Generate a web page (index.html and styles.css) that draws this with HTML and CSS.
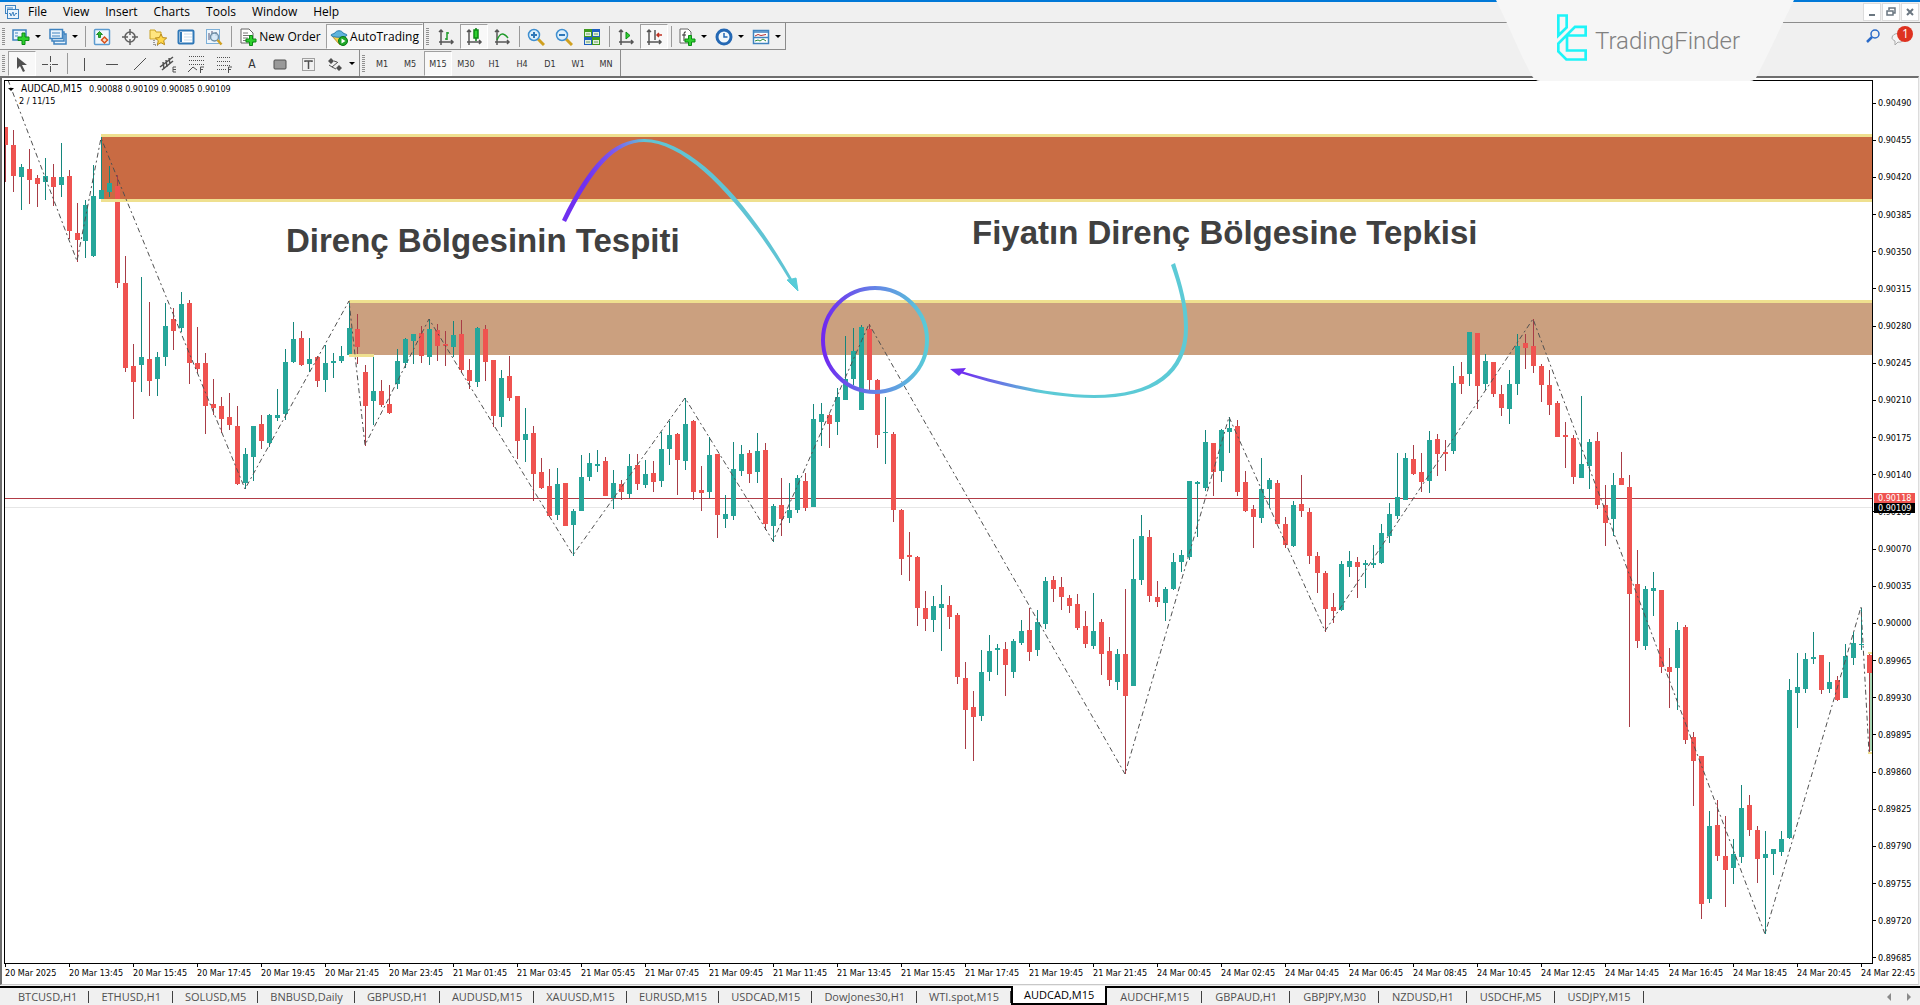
FILE: index.html
```html
<!DOCTYPE html>
<html lang="tr">
<head>
<meta charset="utf-8">
<title>AUDCAD,M15</title>
<link rel="stylesheet" href="styles.css">
<script src="chart.js" defer></script>
</head>
<body>
<header class="top">
  <div class="menubar">
    <svg class="app-icon" viewBox="0 0 16 16" fill="#eaf4fc" stroke="#3f83c0"><rect x="1.500" y="1.500" width="10" height="8"/><rect x="3.500" y="5.500" width="11" height="9"/><path d="M5 10l1-1 1 3 2-4 1 4 2-3 1 1M3 4h6" fill="none"/></svg>
    <nav class="menu">
      <button>File</button><button>View</button><button>Insert</button><button>Charts</button><button>Tools</button><button>Window</button><button>Help</button>
    </nav>
    <div class="window-buttons">
      <button aria-label="Minimize"><svg viewBox="0 0 16 16"><path d="M5 11h6" stroke="#6a7680" stroke-width="2"/></svg></button>
      <button aria-label="Restore"><svg viewBox="0 0 16 16" fill="none" stroke="#6a7680" stroke-width="1.500"><path d="M6 6V4h6v5h-2M4 7h6v4H4z"/></svg></button>
      <button aria-label="Close"><svg viewBox="0 0 16 16"><path d="M5 5l6 6M11 5l-6 6" stroke="#6a7680" stroke-width="2"/></svg></button>
    </div>
  </div>

  <div class="toolbar">
    <div class="group">
      <span class="grip"></span>
      <button class="drop" aria-label="New chart"><svg viewBox="0 0 18 18"><rect x="1" y="2" width="13" height="10" fill="#eaf4fc" stroke="#3f83c0" stroke-width="1.500"/><path d="M3 5h3M3 8h3" stroke="#3f83c0"/><path d="M10 5h3v4h4v3.500h-4v4h-3v-4H6V9h4z" fill="#2fd02f" stroke="#0a8a14"/></svg><i class="arrow"></i></button>
      <button class="drop" aria-label="Profiles"><svg viewBox="0 0 18 18" fill="#eaf4fc" stroke="#3f83c0" stroke-width="1.500"><path d="M5 6h12v10H5z"/><path d="M3 4h12v9H3z"/><path d="M1 1.500h12.500v9H1z"/><path d="M3 5h8M3 8h8" stroke-width="1"/></svg><i class="arrow"></i></button>
      <span class="sep"></span>
      <button aria-label="Market Watch"><svg viewBox="0 0 18 18"><rect x="1.500" y="1.500" width="15" height="15" rx="1" fill="#eef6fc" stroke="#5b9bd0" stroke-width="1.500"/><path d="M6.500 3.500l3 3h-2v3h-2v-3h-2z" fill="#2cb82c" stroke="#0a7a14" stroke-width=".8"/><path d="M11.500 9l3 3-3 3-3-3z" fill="#fbe0c8" stroke="#d8501a" stroke-width="1.500"/></svg></button>
      <button aria-label="Data Window"><svg viewBox="0 0 18 18" fill="none" stroke="#606060" stroke-width="1.500"><circle cx="9" cy="9" r="5"/><path d="M9 1v6M9 11v6M1 9h6M11 9h6"/></svg></button>
      <button aria-label="Navigator"><svg viewBox="0 0 18 18"><path d="M1 2h5l1 2h5v7H1z" fill="#ffe680" stroke="#c9a227"/><path d="M5 12v5h4" fill="none" stroke="#444" stroke-dasharray="1 1"/><path d="M12 6l1.700 3.600 4 .4-3 2.700.9 4L12 14.700 8.400 16.700l.9-4-3-2.700 4-.4z" fill="#ffd84a" stroke="#b88a1a"/></svg></button>
      <button aria-label="Terminal"><svg viewBox="0 0 18 18"><rect x="1.500" y="2.500" width="15" height="13" rx="1" fill="#fff" stroke="#2f78b8" stroke-width="2"/><path d="M4 4v10" stroke="#2f78b8" stroke-width="2"/><path d="M7 6h8M7 9h8M7 12h8" stroke="#c8dcec"/></svg></button>
      <button aria-label="Strategy Tester"><svg viewBox="0 0 18 18"><rect x="1.500" y="1.500" width="13" height="14" fill="#eef6fc" stroke="#7db0d8"/><path d="M4 5v7M7 3v5M11 4v4" stroke="#557"/><circle cx="9.500" cy="9" r="4" fill="#cfe6f6" fill-opacity=".8" stroke="#7090a8" stroke-width="1.500"/><path d="M12.500 12l4 4.500" stroke="#d0a020" stroke-width="2.500"/></svg></button>
      <span class="sep"></span>
      <button class="text new-order"><svg viewBox="0 0 18 18"><path d="M2 1h8l4 4v10H2z" fill="#fff" stroke="#666"/><path d="M4 5h5M4 7.500h8M4 10h5M4 12.500h3" stroke="#777"/><path d="M10.500 7.500h3v3.500H17v3h-3.500v3.500h-3V14H7v-3h3.500z" fill="#2fd02f" stroke="#0a8a14"/></svg>New Order</button>
      <button class="text auto pressed"><svg viewBox="0 0 18 18"><path d="M2 8l8 9 6-8z" fill="#f6d14a" stroke="#b8902a"/><path d="M1 7c0-1 3-1 4-2 1-3 7-3 8 0 1 1 4 1 4 2 0 3-16 3-16 0z" fill="#5fb4dc" stroke="#2d7fae"/><circle cx="13" cy="13" r="4.500" fill="#1fa82a" stroke="#0a7a14"/><path d="M11.500 10.500l4 2.500-4 2.500z" fill="#fff"/></svg>AutoTrading</button>
    </div>
    <div class="group">
      <span class="grip"></span>
      <button aria-label="Bar chart"><svg viewBox="0 0 18 18" fill="none" stroke="#555" stroke-width="1.500"><path d="M4 2v15M2 4l2-2 2 2M2 14h14M14 12l2 2-2 2"/><path d="M10 4v8M12 5h-2M8 11h2" stroke="#1f9a2a" /></svg></button>
      <button class="pressed" aria-label="Candlesticks"><svg viewBox="0 0 18 18" fill="none" stroke="#555" stroke-width="1.500"><path d="M4 2v15M2 4l2-2 2 2M2 14h14M14 12l2 2-2 2"/><path d="M11 0v13" stroke="#0a7a14"/><rect x="9" y="2" width="4" height="8" fill="#2fd02f" stroke="#0a8a14"/></svg></button>
      <button aria-label="Line chart"><svg viewBox="0 0 18 18" fill="none" stroke="#555" stroke-width="1.500"><path d="M4 2v15M2 4l2-2 2 2M2 14h14M14 12l2 2-2 2"/><path d="M4 12c3-7 6-8 11-2" stroke="#1f9a2a"/></svg></button>
      <span class="sep"></span>
      <button aria-label="Zoom in"><svg viewBox="0 0 18 18"><path d="M11 11l6 6" stroke="#d0a020" stroke-width="3"/><circle cx="7" cy="7" r="5.500" fill="#dff0fb" stroke="#3f8fd0" stroke-width="1.500"/><path d="M4 7h6M7 4v6" stroke="#2f78b8" stroke-width="2"/></svg></button>
      <button aria-label="Zoom out"><svg viewBox="0 0 18 18"><path d="M11 11l6 6" stroke="#d0a020" stroke-width="3"/><circle cx="7" cy="7" r="5.500" fill="#dff0fb" stroke="#3f8fd0" stroke-width="1.500"/><path d="M4 7h6" stroke="#2f78b8" stroke-width="2"/></svg></button>
      <button aria-label="Tile windows"><svg viewBox="0 0 18 18"><path d="M1 1h8v8H1zM9 9h8v8H9z" fill="#3f9a1f"/><path d="M9 1h8v8H9zM1 9h8v8H1z" fill="#1f5fc0"/><path d="M2 4h6v4H2zM10 4h6v4h-6zM2 12h6v4H2zM10 12h6v4h-6z" fill="#e4f2dc"/><path d="M3 6h4M11 6h4M3 14h4M11 14h4" stroke="#6a9a6a"/></svg></button>
      <span class="sep"></span>
      <button aria-label="Auto scroll"><svg viewBox="0 0 18 18" fill="none" stroke="#555" stroke-width="1.500"><path d="M4 2v15M2 4l2-2 2 2M2 14h14M14 12l2 2-2 2"/><path d="M9 4l4 3.500L9 11z" fill="#2fd02f" stroke="#0a8a14" stroke-width="1"/></svg></button>
      <button class="pressed" aria-label="Chart shift"><svg viewBox="0 0 18 18" fill="none" stroke="#555" stroke-width="1.500"><path d="M4 2v15M2 4l2-2 2 2M2 14h14M14 12l2 2-2 2M10 2v10"/><path d="M17 7h-5M14 5l-2 2 2 2" stroke="#c03020"/></svg></button>
      <span class="sep"></span>
      <button class="drop" aria-label="Indicators"><svg viewBox="0 0 18 18"><path d="M2 1h8l3 3v11H2z" fill="#fff" stroke="#666"/><path d="M8 4q-2-1-2 2v7M4 7h4" fill="none" stroke="#333"/><path d="M10.500 7.500h3v3.500H17v3h-3.500v3.500h-3V14H7v-3h3.500z" fill="#2fd02f" stroke="#0a8a14"/></svg><i class="arrow"></i></button>
      <button class="drop" aria-label="Periods"><svg viewBox="0 0 18 18"><circle cx="9" cy="9" r="7" fill="#f2f8fc" stroke="#2468b4" stroke-width="3"/><path d="M9 5v4h3.500" fill="none" stroke="#2468b4" stroke-width="1.500"/></svg><i class="arrow"></i></button>
      <button class="drop" aria-label="Templates"><svg viewBox="0 0 18 18"><rect x="1.500" y="2.500" width="15" height="13" fill="#fff" stroke="#3f83c0" stroke-width="1.500"/><path d="M2 4h14M2 9.500h14" stroke="#3f83c0" stroke-width="1.500"/><path d="M3 8l3-1.500 3 1 5-1" fill="none" stroke="#b03030"/><path d="M3 13l3-1 2 1 3-2 3 2" fill="none" stroke="#2a8a3a"/></svg><i class="arrow"></i></button>
    </div>
    <div class="alerts">
      <svg class="search" viewBox="0 0 14 14" fill="none" stroke="#2a6ac8"><circle cx="9" cy="5" r="4" stroke-width="1.500"/><path d="M6 8l-5 5" stroke-width="2.500"/></svg>
      <span class="messages"><svg viewBox="0 0 22 20"><path d="M1 12c0-6 12-6 12 0 0 3-4 5-6 4l-3 3v-4c-2-1-3-2-3-3z" fill="#f4f4f4" stroke="#a8a8a8"/><circle cx="14" cy="8" r="8" fill="#de3220"/></svg><b>1</b></span>
    </div>
  </div>

  <div class="toolbar periods">
    <div class="group">
      <span class="grip"></span>
      <button class="pressed" aria-label="Cursor"><svg viewBox="0 0 18 18"><path d="M4 2v12l3-3 3 6 2-1-3-6h5z" fill="#505050"/></svg></button>
      <button aria-label="Crosshair"><svg viewBox="0 0 18 18" stroke="#505050"><path d="M9.500 1v6M9.500 11v6M1 9.500h6M11 9.500h6M9 9.500h1"/></svg></button>
      <span class="sep"></span>
      <button aria-label="Vertical line"><svg viewBox="0 0 18 18" stroke="#505050"><path d="M9.500 3v13"/></svg></button>
      <button aria-label="Horizontal line"><svg viewBox="0 0 18 18" stroke="#505050"><path d="M3 9.500h12"/></svg></button>
      <button aria-label="Trendline"><svg viewBox="0 0 18 18" stroke="#505050"><path d="M3 15L15 3"/></svg></button>
      <button aria-label="Equidistant channel"><svg viewBox="0 0 18 18" stroke="#505050" fill="none"><path d="M1 12L14 2M3 15L14 6M4 7l1 7M7 5l1 7M10 3l1 6" stroke-width="1.500"/><path d="M17 12h-3v5h3M14 14.500h3"/></svg></button>
      <button aria-label="Fibonacci channel"><svg viewBox="0 0 18 18" stroke="#505050" fill="none"><path d="M2 1.500h15M2 5.500h15M2 9.500h15" stroke-dasharray="1 1"/><path d="M1 17l5-5 4 3M13.500 18v-6H17M13 14.500h3"/></svg></button>
      <button aria-label="Fibonacci retracement"><svg viewBox="0 0 18 18" stroke="#505050" fill="none"><path d="M2 2.500h14M2 6.500h14M2 10.500h14M2 14.500h9" stroke-dasharray="1 1"/><path d="M13.500 18v-6H17M13 14.500h3"/></svg></button>
      <button class="letter">A</button>
      <button aria-label="Rectangle"><svg viewBox="0 0 18 18"><rect x="3" y="5" width="12" height="9" rx="1" fill="#9a9a9a" stroke="#505050"/></svg></button>
      <button aria-label="Text label"><svg viewBox="0 0 18 18" fill="none" stroke="#505050"><rect x="3.500" y="3.500" width="12" height="12" stroke-dasharray="1 1"/><path d="M6 7V6h7v1M9.500 6v8" stroke-width="1.500"/></svg></button>
      <button class="drop" aria-label="Arrows"><svg viewBox="0 0 18 18"><path d="M5 3l3 3-3 3-3-3zM13 10l3 3-3 3-3-3z" fill="#505050"/><path d="M3 10l3 2 6-5M8 6l3 1M6 12l4 2" stroke="#505050" fill="none"/></svg><i class="arrow"></i></button>
    </div>
    <div class="group">
      <span class="grip"></span>
      <button>M1</button><button>M5</button><button class="pressed">M15</button><button>M30</button><button>H1</button><button>H4</button><button>D1</button><button>W1</button><button>MN</button>
    </div>
  </div>

  <div class="brand">
    <svg class="brand-plate" viewBox="0 0 298 81" preserveAspectRatio="none"><path d="M0 0H298C285 26 272 55 261 76Q259 81 254 81H44Q39 81 36 76C24 54 14 28 0 0z" fill="#f6f6f6"/></svg>
    <svg class="brand-mark" viewBox="0 0 90 140" fill="none" stroke="#1ef4f8" stroke-width="8"><path d="M4 64V4H29V40Z M30 64H86V38H54L4 88V112L28 136H86V109H30Z"/></svg>
    <span>TradingFinder</span>
  </div>
</header>

<main class="chart">
  <div class="plot">
    <svg class="canvas" viewBox="5 81 1867 882">
      <defs>
        <linearGradient id="ring"><stop offset="0" stop-color="#7028f0"/><stop offset=".5" stop-color="#6484e6"/><stop offset="1" stop-color="#58ccd8"/></linearGradient>
        <linearGradient id="arc1" gradientUnits="userSpaceOnUse" x1="585" y1="0" x2="645" y2="0"><stop offset="0" stop-color="#7030f0"/><stop offset=".5" stop-color="#7c5cf0"/><stop offset="1" stop-color="#60c4d4"/></linearGradient>
        <linearGradient id="arc2" gradientUnits="userSpaceOnUse" x1="965" y1="0" x2="1040" y2="0"><stop offset="0" stop-color="#7030f0"/><stop offset="1" stop-color="#5ccad6"/></linearGradient>
      </defs>
      <g shape-rendering="crispEdges">
        <rect x="101" y="137" width="1772" height="62" fill="#c96b43"/>
        <rect x="349" y="303" width="1524" height="52" fill="#cba07f"/>
        <rect x="1870" y="655" width="2" height="96" fill="#a9d6b4"/>
        <path d="M5 507.500H1873" stroke="#e6e6e6"/>
        <path d="M5 498.500H1873" stroke="#b23b46"/>
        <path class="wick up"/><path class="wick down"/><path class="body up"/><path class="body down"/>
        <path d="M101 134h1772v3H101zM101 199h1772v3H101zM349 300h1524v3H349zM349 354h25v3h-25zM1868 652h4v2h-4zM1868 752h4v2h-4z" fill="#efe08f"/>
      </g>
      <path class="zigzag" d="M8 80L77 261L101 138L245 489L349 301L365 445L429 319L573 555L685 398L773 541L869 324L1125 774L1229 417L1325 631L1533 319L1765 934L1861 607L1869 753"/>
      <circle cx="875" cy="340" r="52" fill="none" stroke="url(#ring)" stroke-width="4"/>
      <path d="M562 220C589 164 613 139 644 139C694 139 752 208 792 279L790 281C749 212 690 142 644 142C616 142 593 168 566 222Z" fill="url(#arc1)"/>
      <path d="M798 291l-11-11 5-1 4-1z" fill="#58ccd8" stroke="#58ccd8"/>
      <path d="M1171 265L1175 263C1182 285 1188 305 1188 328C1188 374 1155 398 1094 398C1050 398 1000 386 960 373L961 371C1000 382 1050 395 1094 395C1153 395 1184 370 1184 328C1184 305 1178 285 1171 265Z" fill="url(#arc2)"/>
      <path d="M950 369l16-1-3 4-4 4z" fill="#7030f0"/>
      <text class="note" x="286" y="252">Direnç Bölgesinin Tespiti</text>
      <text class="note" x="972" y="244">Fiyatın Direnç Bölgesine Tepkisi</text>
    </svg>
    <div class="quote"><p><i class="arrow"></i><span class="symbol">AUDCAD,M15</span><span>0.90088 0.90109 0.90085 0.90109</span></p><p class="counter">2 / 11/15</p></div>
  </div>
  <div class="prices">
    <span>0.90490</span><span>0.90455</span><span>0.90420</span><span>0.90385</span><span>0.90350</span><span>0.90315</span><span>0.90280</span><span>0.90245</span><span>0.90210</span><span>0.90175</span><span>0.90140</span><span>0.90105</span><span>0.90070</span><span>0.90035</span><span>0.90000</span><span>0.89965</span><span>0.89930</span><span>0.89895</span><span>0.89860</span><span>0.89825</span><span>0.89790</span><span>0.89755</span><span>0.89720</span><span>0.89685</span>
    <b class="ask">0.90118</b><b class="bid">0.90109</b>
  </div>
  <div class="times">
    <span>20 Mar 2025</span><span>20 Mar 13:45</span><span>20 Mar 15:45</span><span>20 Mar 17:45</span><span>20 Mar 19:45</span><span>20 Mar 21:45</span><span>20 Mar 23:45</span><span>21 Mar 01:45</span><span>21 Mar 03:45</span><span>21 Mar 05:45</span><span>21 Mar 07:45</span><span>21 Mar 09:45</span><span>21 Mar 11:45</span><span>21 Mar 13:45</span><span>21 Mar 15:45</span><span>21 Mar 17:45</span><span>21 Mar 19:45</span><span>21 Mar 21:45</span><span>24 Mar 00:45</span><span>24 Mar 02:45</span><span>24 Mar 04:45</span><span>24 Mar 06:45</span><span>24 Mar 08:45</span><span>24 Mar 10:45</span><span>24 Mar 12:45</span><span>24 Mar 14:45</span><span>24 Mar 16:45</span><span>24 Mar 18:45</span><span>24 Mar 20:45</span><span>24 Mar 22:45</span>
  </div>
</main>

<nav class="tabs">
  <button>BTCUSD,H1</button><button>ETHUSD,H1</button><button>SOLUSD,M5</button><button>BNBUSD,Daily</button><button>GBPUSD,H1</button><button>AUDUSD,M15</button><button>XAUUSD,M15</button><button>EURUSD,M15</button><button>USDCAD,M15</button><button>DowJones30,H1</button><button>WTI.spot,M15</button><button class="active">AUDCAD,M15</button><button>AUDCHF,M15</button><button>GBPAUD,H1</button><button>GBPJPY,M30</button><button>NZDUSD,H1</button><button>USDCHF,M5</button><button>USDJPY,M15</button>
  <svg class="scroll" viewBox="0 0 26 10" fill="#8a8a8a"><path d="M5 1v8L1 5zM21 1v8l4-4z"/></svg>
</nav>
</body>
</html>
```
FILE: styles.css
```css
* { box-sizing: border-box; }
body {
  margin: 0;
  min-height: 100vh;
  display: flex;
  flex-direction: column;
  overflow-x: hidden;
  background: #f0f0f0;
  color: #000;
  font: 12px/16px "Open Sans", "Noto Sans", sans-serif;
}
button {
  margin: 0;
  padding: 0;
  border: 0;
  background: none;
  color: inherit;
  font: inherit;
  white-space: nowrap;
}
p { margin: 0; }
svg { display: block; flex: none; }

.top { position: relative; border-top: 2px solid #0078d7; }
.menubar {
  display: flex;
  align-items: center;
  height: 21px;
  padding: 0 1px 0 4px;
  border-bottom: 1px solid #8c8c8c;
}
.app-icon { width: 16px; height: 16px; margin-right: 8px; }
.menu { display: flex; gap: 16px; }
.window-buttons { display: flex; gap: 1px; margin-left: auto; }
.window-buttons button { width: 18px; height: 18px; border: 1px solid #dcdcdc; background: #fff; }

.toolbar { display: flex; height: 27px; }
.group {
  display: flex;
  align-items: stretch;
  padding: 1px 0 0 2px;
  border-right: 1px solid #8c8c8c;
  border-bottom: 1px solid #8c8c8c;
}
.group button { display: flex; align-items: center; justify-content: center; width: 28px; }
.group svg { width: 18px; height: 18px; }
.group .drop { width: 37px; gap: 5px; }
.group .text { gap: 2px; }
.group .new-order { width: 92px; }
.group .auto { width: 97px; }
.group .pressed {
  border: 1px solid #a0a0a0;
  border-right-color: #fff;
  border-bottom-color: #fff;
  background: #f8f8f8;
}
.grip {
  width: 3px;
  margin: 4px 3px 4px 0;
  background: repeating-linear-gradient(#909090 0 1px, transparent 1px 2px);
}
.sep { width: 1px; margin: 2px 2px 2px 3px; background: #9a9a9a; }
.arrow {
  flex: none;
  width: 0;
  border: solid transparent;
  border-width: 3px 3px 0;
  border-top-color: #000;
}
.periods { height: 26px; color: #333; font: 9px/12px "DejaVu Sans Condensed", "DejaVu Sans", sans-serif; }
.periods .group { border-bottom: 0; }
.group .letter { font-size: 12px; }

.alerts { display: flex; align-items: flex-start; gap: 11px; margin-left: auto; padding: 3px 7px 0 0; }
.search { width: 14px; height: 14px; margin-top: 3px; }
.messages { position: relative; }
.messages svg { width: 22px; height: 20px; }
.messages b { position: absolute; left: 11px; top: 0; color: #fff; font-weight: 400; }

.brand {
  position: absolute;
  z-index: 1;
  top: -2px;
  right: 126px;
  display: flex;
  align-items: center;
  gap: 8px;
  width: 298px;
  height: 81px;
  padding: 0 0 6px 61px;
  color: #808080;
  font: 300 24px/32px Roboto, sans-serif;
}
.brand-plate { position: absolute; inset: 0; width: 100%; height: 100%; }
.brand-mark { position: relative; width: 30px; height: 47px; }
.brand span { position: relative; padding-top: 6px; }

.chart {
  display: grid;
  grid-template-columns: 1fr 45px;
  margin-right: 1px;
  padding: 2px 0 0 2px;
  border: solid #6e6e6e;
  border-width: 2px 1px 1px 2px;
  border-right-color: #dcdcdc;
  border-bottom-color: #c8c8c8;
  background: #fff;
  font: 9px/12px "DejaVu Sans Condensed", "DejaVu Sans", sans-serif;
}
.plot { position: relative; border: 1px solid #000; }
.canvas { width: 100%; height: auto; }
.wick.up { fill: #14867c; }
.wick.down { fill: #a83c46; }
.body.up { fill: #26a69a; }
.body.down { fill: #ef5350; }
.zigzag { fill: none; stroke: #505050; stroke-dasharray: 5 3 2 3; }
.note { fill: #404040; font: 700 33px "Liberation Sans", sans-serif; }
.quote { position: absolute; top: 2px; left: 3px; }
.quote p { display: flex; align-items: center; gap: 7px; }
.quote .symbol { font-size: 10px; }
.quote .counter { padding-left: 11px; }

.prices {
  position: relative;
  display: flex;
  flex-direction: column;
  justify-content: space-between;
  padding-top: 17px;
}
.prices span { display: flex; align-items: center; gap: 2px; }
.prices span::before { content: ""; width: 3px; height: 1px; background: #000; }
.prices b {
  position: absolute;
  left: 1px;
  width: 41px;
  padding-left: 4px;
  color: #fff;
  font-weight: 400;
  line-height: 10px;
}
.ask { top: 46.700%; background: #ef5350; }
.bid { top: 47.800%; background: #000; }

.times { display: flex; height: 20px; padding-left: 1px; }
.times span { flex: 0 0 calc(100% * 64 / 1868); text-indent: -1px; white-space: nowrap; }
.times span::before { content: ""; display: block; width: 1px; height: 3px; background: #000; }

.tabs {
  display: flex;
  margin-top: auto;
  height: 19px;
  padding-left: 6px;
  border-top: 2px solid #000;
  color: #505050;
  font-size: 11px;
}
.tabs button { position: relative; padding: 0 12px; }
.tabs button::after { content: ""; position: absolute; right: 0; top: 3px; height: 12px; border-right: 1px solid #404040; }
.tabs .active { margin-top: -2px; padding: 0 11px; border: solid #000; border-width: 0 2px 2px; background: #fff; color: #000; }
.tabs .active::after { content: none; }
.tabs .active ~ button { padding: 0 13px; }
.scroll { width: 26px; height: 10px; margin: 4px 8px 0 auto; }
```
FILE: chart.js
```js
// Candles are 8px apart. Each row is: direction, high, body top, body bottom, low,
// measured down from the block's base in steps of 1/unit px.
const blocks = [
  { first: -1, base: 100, unit: 3, rows: `r 81 81 135 245
r 90 135 228 276|g 192 201 231 330|r 147 207 240 312|r 225 234 252 321|g 174 228 246 300
r 192 231 261 318|g 129 231 255 291|r 210 228 393 417|r 309 399 420 486|g 300 315 423 474
g 195 288 468 471|g 111 270 298 298|g 198 249 277 290|r 225 258 549 563|r 468 549 804 816
r 732 798 846 957|g 531 771 795 876|r 606 777 843 888|g 756 771 837 888|g 609 678 771 798
r 624 657 693 750|g 576 612 684 697|r 600 609 789 852|r 681 789 807 818|r 759 789 918 1002
r 837 912 924 945|r 891 918 957 999|r 879 951 975 990|r 918 978 1152 1155|g 1044 1062 1149 1167
g 978 978 1071 1143|r 945 972 1023 1047|g 942 945 1029 1040|g 867 945 954 963|g 747 786 942 960
g 666 717 786 789|r 693 714 795 798|g 714 777 792 816|r 768 771 843 861|g 735 789 840 876
g 759 783 789 834|g 738 768 783 789|g 609 684 765 768|r 642 687 741 792|r 795 816 918 1037
g 770 873 903 974|r 840 873 915 921|r 855 912 939 942|g 747 783 852 866` },
  { first: 49, base: 280, unit: 3, rows: `g 175 177 249 264
g 162 162 183 252|r 138 159 228 249|g 118 147 231 255|r 132 150 198 243|r 153 192 198 259
g 123 165 201 231|r 120 162 270 279|r 237 270 303 327|g 141 144 306 321|r 135 147 246 303
r 240 240 408 441|g 270 294 411 441|r 228 288 354 363|r 348 348 483 537|g 384 462 480 546
r 438 459 582 663|r 534 576 624 627|r 567 618 708 711|g 564 612 705 720|r 609 609 738 738
g 687 693 735 827|g 525 591 693 693|g 519 549 591 603|g 510 552 558 576|r 531 543 648 648
g 570 609 654 687|r 600 612 636 660|g 522 558 642 655|r 522 555 612 630|g 540 582 615 624
r 543 579 606 636|g 456 507 603 621|g 423 465 507 555|r 459 462 540 645|g 354 432 543 570
r 420 423 636 660|r 558 630 639 693|g 471 525 636 655|r 522 522 705 774|g 645 702 717 744
g 486 567 708 720|g 495 522 573 588|r 510 519 582 609|g 459 513 576 609|r 489 510 732 749
g 672 678 738 785|r 594 675 717 768|g 609 690 714 729|g 585 594 690 699` },
  { first: 99, base: 260, unit: 3, rows: `r 639 663 744 753
g 432 477 741 741|g 429 462 486 558|r 462 465 492 564|g 384 411 486 525|g 228 357 420 420
g 204 273 357 375|g 195 201 450 450|r 192 207 360 393|r 357 360 525 564|g 411 516 519 612
r 516 522 750 786|r 747 750 897 945|r 816 885 891 963|r 888 891 1044 1098|r 993 1044 1077 1113
g 1008 1038 1080 1116|g 975 1032 1044 1173|r 1008 1035 1071 1107|r 1059 1065 1251 1272|r 1206 1254 1350 1467
r 1293 1341 1371 1503|g 1170 1236 1368 1383|g 1125 1173 1236 1263|g 1152 1164 1170 1245|r 1146 1167 1215 1308
g 1137 1143 1236 1254|g 1080 1113 1149 1155|r 1044 1110 1176 1203|g 1050 1086 1170 1188|g 951 963 1092 1107
r 948 960 987 1026|r 951 981 1011 1050|r 1005 1014 1038 1059|r 1002 1032 1104 1110|r 1053 1098 1152 1164
g 999 1113 1158 1167|r 1077 1086 1182 1245|r 1131 1173 1260 1278|g 1167 1182 1266 1290|r 987 1182 1308 1542
g 837 957 1278 1278|g 765 828 960 975|r 810 831 1008 1026|r 963 1011 1026 1041|g 981 987 1029 1083
g 879 906 987 990` },
  { first: 146, base: 400, unit: 3, rows: `g 450 465 486 516
g 243 243 471 480|g 243 246 252 411|g 90 126 264 273|r 129 129 216 288|g 87 90 213 246
g 51 84 96 159|r 60 78 276 288|r 213 246 333 336|r 315 327 351 444|g 174 267 354 369
g 234 240 267 324|r 240 249 372 372|r 351 372 435 444|g 303 315 438 441|r 225 312 333 351
r 324 336 468 492|r 456 468 519 579|r 513 519 627 696|r 579 621 633 669|g 483 492 630 633
g 453 483 501 531|r 471 486 501 594|g 480 489 495 564|g 435 489 495 503|g 372 399 489 492
g 309 342 408 429|g 159 291 348 357|g 159 174 300 300|r 135 177 222 225|r 159 216 246 276
g 93 120 243 279|r 102 117 162 228|r 120 156 162 213` },
  { first: 180, base: 300, unit: 2.306, rows: `g 152 191 348 355
r 143 175 194 217|g 74 74 171 198|r 76 76 198 251|g 125 141 194 208|r 143 143 217 224
r 196 217 249 267|g 161 194 251 286|g 78 106 194 219|r 78 99 111 159|r 44 106 152 168
r 148 152 196 235|r 161 196 242 265|r 233 238 316 316|r 281 311 316 387|r 311 318 408 424
g 221 378 410 410|g 321 327 383 436|r 304 325 473 482|r 427 473 514 567|g 399 427 505 544
r 350 410 427 427|r 404 431 678 985|r 576 655 786 802|g 659 666 798 807|g 627 664 671 729
r 669 669 846 860|r 802 846 858 941|g 742 761 849 945|r 749 754 1015 1024|r 996 1008 1063 1167
r 1051 1051 1393 1427|g 1178 1213 1381 1390|r 1153 1211 1282 1294|r 1190 1282 1314 1400|g 1243 1277 1310 1347
g 1118 1171 1284 1298|r 1141 1164 1222 1236|r 1213 1222 1289 1344|g 1224 1277 1287 1463|g 1266 1266 1277 1326
g 1224 1243 1273 1282|g 874 899 1241 1243|g 814 892 906 987|g 814 828 897 906|g 766 823 828 839
r 819 819 899 909|g 835 881 897 906|r 867 876 922 924|g 793 821 918 918|g 766 791 826 842
g 710 793 796 807|r 814 819 860 1047` },
];

const paths = { wick: { g: "", r: "" }, body: { g: "", r: "" } };
for (const { first, base, unit, rows } of blocks) {
  rows.split(/[|\n]/).forEach((row, i) => {
    const [dir, ...levels] = row.trim().split(" ");
    const [high, top, bottom, low] = levels.map((v) => Math.round(base + v / unit));
    const x = 13 + 8 * (first + i);
    paths.wick[dir] += `M${x} ${high}h1V${low}h-1z`;
    paths.body[dir] += `M${x - 2} ${top}h5V${Math.max(bottom, top + 1)}h-5z`;
  });
}
for (const part of ["wick", "body"]) {
  document.querySelector(`.${part}.up`).setAttribute("d", paths[part].g);
  document.querySelector(`.${part}.down`).setAttribute("d", paths[part].r);
}
```
